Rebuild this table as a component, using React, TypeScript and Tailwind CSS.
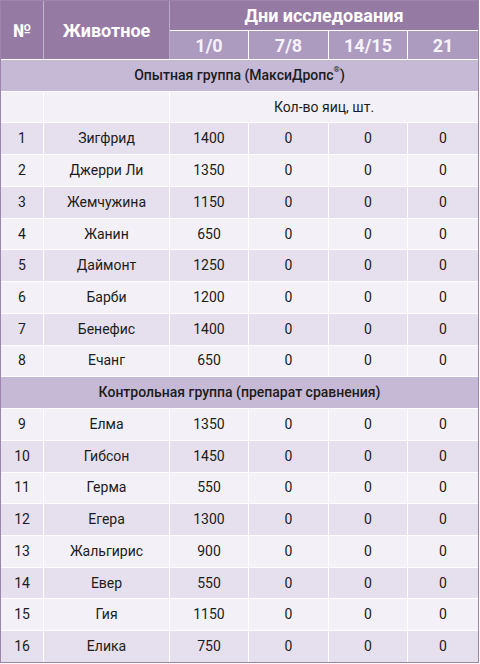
import React from "react";

const groupA = [
  ["1", "Зигфрид", "1400"],
  ["2", "Джерри Ли", "1350"],
  ["3", "Жемчужина", "1150"],
  ["4", "Жанин", "650"],
  ["5", "Даймонт", "1250"],
  ["6", "Барби", "1200"],
  ["7", "Бенефис", "1400"],
  ["8", "Ечанг", "650"],
];
const groupB = [
  ["9", "Елма", "1350"],
  ["10", "Гибсон", "1450"],
  ["11", "Герма", "550"],
  ["12", "Егера", "1300"],
  ["13", "Жальгирис", "900"],
  ["14", "Евер", "550"],
  ["15", "Гия", "1150"],
  ["16", "Елика", "750"],
];

const cell = "flex items-center justify-center";

function Rows({ rows, firstDark }: { rows: string[][]; firstDark: boolean }) {
  return (
    <>
      {rows.map((r, i) => {
        const dark = (i % 2 === 0) === firstDark;
        const bg = dark ? "bg-[#e6e0ee]" : "bg-[#f3f1f7]";
        return (
          <React.Fragment key={r[0]}>
            <div className={`${cell} ${bg}`}>{r[0]}</div>
            <div className={`${cell} ${bg}`}>{r[1]}</div>
            <div className={`${cell} ${bg}`}>{r[2]}</div>
            <div className={`${cell} ${bg}`}>0</div>
            <div className={`${cell} ${bg}`}>0</div>
            <div className={`${cell} ${bg}`}>0</div>
          </React.Fragment>
        );
      })}
    </>
  );
}

export default function App() {
  return (
    <div
      className="w-[480px] h-[664px] bg-white"
      style={{ fontFamily: "Roboto, 'Noto Sans', sans-serif" }}
    >
      <div className="w-[479px] border border-[#9c84aa] bg-white grid grid-cols-[42px_125px_78px_79px_78px_70px] grid-rows-[29px_28px_repeat(19,30.74px)] gap-px text-[14px] text-[#1c1c1c]">
        <div className={`${cell} row-span-2 -mr-px border-r border-[#c2b3ce] bg-[#957aa4] text-white font-bold text-[18px]`}>
          №
        </div>
        <div className={`${cell} row-span-2 -mr-px border-r border-[#b8a7c6] bg-[#957aa4] text-white font-bold text-[18px]`}>
          Животное
        </div>
        <div className={`${cell} col-span-4 bg-[#957aa4] text-white font-bold text-[18px]`}>
          Дни исследования
        </div>
        <div className={`${cell} bg-[#ad9abf] text-[#f6f2fa] font-bold text-[18px]`}>1/0</div>
        <div className={`${cell} bg-[#ad9abf] text-[#f6f2fa] font-bold text-[18px]`}>7/8</div>
        <div className={`${cell} bg-[#ad9abf] text-[#f6f2fa] font-bold text-[18px]`}>14/15</div>
        <div className={`${cell} bg-[#ad9abf] text-[#f6f2fa] font-bold text-[18px]`}>21</div>

        <div className={`${cell} col-span-6 bg-[#c6b9d5] font-medium`}>
          Опытная группа (МаксиДропс<sup className="text-[8px] -top-[5px]">®</sup>)
        </div>
        <div className="bg-[#f3f1f7]" />
        <div className="bg-[#f3f1f7]" />
        <div className={`${cell} col-span-4 bg-[#f3f1f7]`}>Кол-во яиц, шт.</div>
        <Rows rows={groupA} firstDark={true} />

        <div className={`${cell} col-span-6 bg-[#c6b9d5] font-medium`}>
          Контрольная группа (препарат сравнения)
        </div>
        <Rows rows={groupB} firstDark={false} />
      </div>
    </div>
  );
}
